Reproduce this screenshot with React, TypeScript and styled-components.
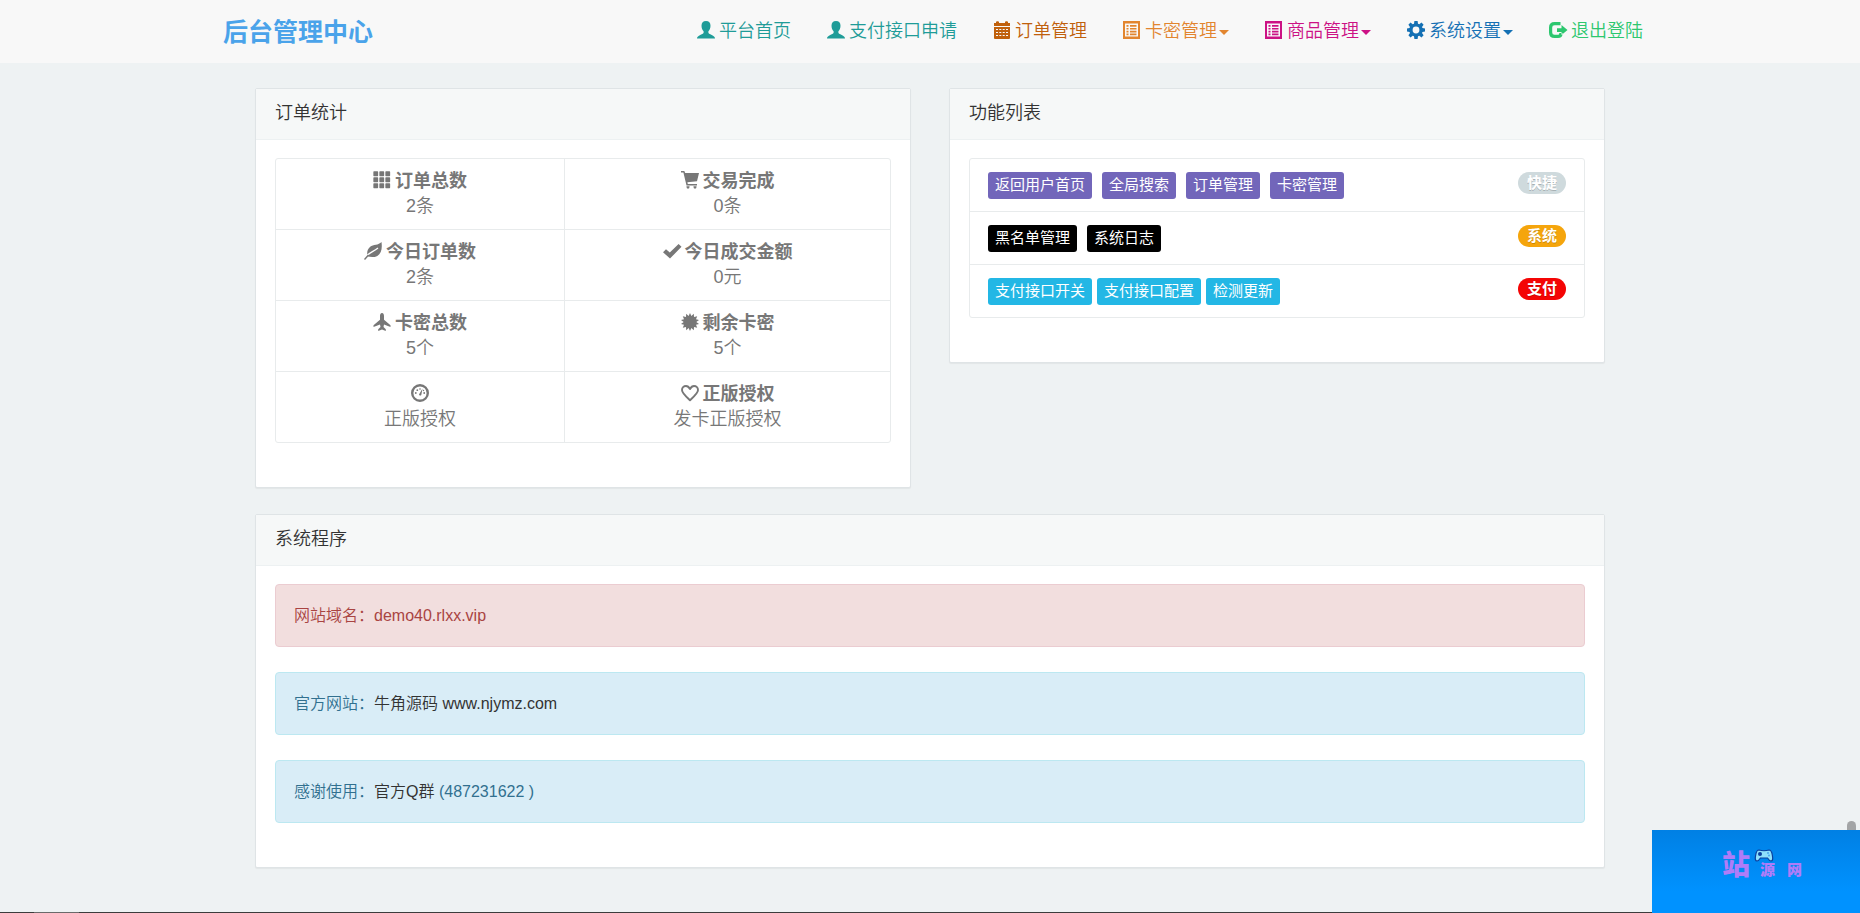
import React from 'react';
import styled, { createGlobalStyle } from 'styled-components';

const GlobalStyle = createGlobalStyle`
  *, *::before, *::after { box-sizing: border-box; }
  body {
    margin: 0;
    background: #eef2f3;
    color: #333;
    font: 350 16px/25px "Liberation Sans", "Noto Sans CJK SC", sans-serif;
  }
  a { color: inherit; text-decoration: none; }
`;

const Page = styled.div`
  min-height: 100vh;
`;

const Header = styled.header`
  background: #f8f8f8;
  padding: 0 16px;
`;

const HeaderInner = styled.div`
  display: flex;
  align-items: center;
  justify-content: space-between;
  max-width: 1426px;
  min-height: 63px;
  margin: 0 auto;
`;

const Brand = styled.a`
  padding-left: 6px;
  font-size: 25px;
  line-height: 36px;
  font-weight: 700;
  color: #4aa3ea;
`;

const Nav = styled.nav`
  display: flex;
  flex-wrap: wrap;
  gap: 0 36px;
`;

const NavLink = styled.a<{ $color: string }>`
  display: inline-flex;
  align-items: center;
  gap: 4px;
  font-size: 18px;
  line-height: 25px;
  color: ${p => p.$color};
`;

const NavToggle = styled.button<{ $color: string }>`
  display: inline-flex;
  align-items: center;
  gap: 4px;
  padding: 0;
  border: 0;
  background: none;
  font: inherit;
  font-size: 18px;
  line-height: 25px;
  color: ${p => p.$color};
  cursor: pointer;
`;

const Caret = styled.span`
  display: inline-block;
  margin-left: 2px;
  vertical-align: middle;
  border-top: 5px solid currentColor;
  border-left: 5px solid transparent;
  border-right: 5px solid transparent;
`;

const Glyph = styled.svg`
  flex: none;
  width: 18px;
  height: 18px;
  margin-bottom: 3px;
  fill: currentColor;
`;

const Main = styled.main`
  display: grid;
  grid-template-columns: 1fr 1fr;
  align-items: start;
  gap: 26px 38px;
  max-width: 1350px;
  margin: 0 auto;
  padding: 25px 0;
`;

const Panel = styled.section<{ $wide?: boolean }>`
  grid-column: ${p => (p.$wide ? '1 / -1' : 'auto')};
  background: #fff;
  border: 1px solid #dfe4e6;
  border-radius: 2px;
  box-shadow: 0 1px 1px rgba(0, 0, 0, 0.05);
`;

const PanelTitle = styled.h2`
  margin: 0;
  padding: 12px 19px 13px;
  background: #f6f8f8;
  border-bottom: 1px solid #edf1f2;
  font-size: 18px;
  line-height: 25px;
  font-weight: 350;
  color: #333;
`;

const PanelBody = styled.div`
  padding: 18px 19px 44px;
`;

const StatsFrame = styled.div`
  border: 1px solid #e8ebec;
  border-radius: 3px;
`;

const Stats = styled.table`
  width: 100%;
  border-collapse: collapse;
  text-align: center;
  font-size: 18px;
  line-height: 25px;
  color: #777;
`;

const StatCell = styled.td`
  padding: 10px 18px;
  border-bottom: 1px solid #e8ebec;
  tr:last-child > & { border-bottom: 0; }
  &:first-child { width: 47%; border-right: 1px solid #e8ebec; }
`;

const StatName = styled.div`
  display: flex;
  align-items: center;
  justify-content: center;
  gap: 4px;
  min-height: 25px;
  font-weight: 700;
`;

const Functions = styled.ul`
  margin: 0;
  padding: 0;
  list-style: none;
  border: 1px solid #e8ebec;
  border-radius: 3px;
`;

const FunctionRow = styled.li`
  display: flex;
  justify-content: space-between;
  align-items: flex-start;
  padding: 13px 18px 12px;
  & + & { border-top: 1px solid #e8ebec; }
`;

const Labels = styled.div<{ $gap: number }>`
  display: flex;
  flex-wrap: wrap;
  gap: ${p => p.$gap}px;
`;

const Label = styled.a<{ $color: string }>`
  padding: 1px 7px 2px;
  border-radius: 3px;
  background: ${p => p.$color};
  color: #fff;
  font-size: 15px;
  line-height: 24px;
  font-weight: 400;
`;

const Badge = styled.span<{ $color: string }>`
  padding: 0 9px;
  border-radius: 11px;
  background: ${p => p.$color};
  color: #fff;
  font-size: 15px;
  line-height: 22px;
  font-weight: 700;
  text-shadow: 0 1px 0 rgba(0, 0, 0, 0.2);
`;

const Notices = styled.div`
  display: grid;
  gap: 25px;
`;

const Notice = styled.p<{ $danger?: boolean }>`
  margin: 0;
  padding: 18px;
  border: 1px solid ${p => (p.$danger ? '#ebccd1' : '#bce8f1')};
  border-radius: 4px;
  background: ${p => (p.$danger ? '#f2dede' : '#d9edf7')};
  color: ${p => (p.$danger ? '#a94442' : '#31708f')};
`;

const NoticeLink = styled.a`
  color: #333;
`;

const Watermark = styled.aside`
  position: fixed;
  right: 0;
  bottom: 0;
  display: flex;
  justify-content: center;
  align-items: flex-start;
  width: 208px;
  height: 83px;
  padding: 18px 0 0 12px;
  background: linear-gradient(#0080e4, #0092ff 75%);
  color: #b07cf8;
  font-weight: 900;
`;

const MarkBig = styled.span`
  font-size: 28px;
  line-height: 36px;
`;

const MarkSmall = styled.span`
  display: flex;
  gap: 12px;
  font-size: 15px;
  line-height: 16px;
`;

const MarkColumn = styled.div`
  display: grid;
  padding-left: 10px;
`;

const Pad = styled.svg`
  width: 20px;
  height: 14px;
  margin-left: -6px;
`;

const ScrollTip = styled.div`
  position: fixed;
  right: 4px;
  bottom: 83px;
  width: 9px;
  height: 9px;
  border-radius: 5px 5px 0 0;
  background: #a3a5a6;
`;

const BottomEdge = styled.div`
  position: fixed;
  left: 0;
  right: 208px;
  bottom: 0;
  height: 1px;
  background: linear-gradient(90deg, #3c3c3c 34px, #6a6a6a 34px 79px, #3c3c3c 79px);
`;

const shapes = {
  user: <path d="M9 0C6 0 4.500 2 4.500 4.800C4.500 7.400 5.400 9.200 6.600 10.300V11.800C6.300 12.800 4.600 13.300 2.800 14.200C1 15.100 0 16 0 17.600H18C18 16 17 15.100 15.200 14.200C13.400 13.300 11.700 12.800 11.400 11.800V10.300C12.600 9.200 13.500 7.400 13.500 4.800C13.500 2 12 0 9 0Z" />,
  calendar: <path fillRule="evenodd" d="M1 2H3V1C3 0 6 0 6 1V2H12V1C12 0 15 0 15 1V2H17V5H1ZM1 6H17V17Q17 18 16 18H2Q1 18 1 17ZM3 8V9H5V8ZM6.300 8V9H8.300V8ZM9.700 8V9H11.700V8ZM13 8V9H15V8ZM3 11V12H5V11ZM6.300 11V12H8.300V11ZM9.700 11V12H11.700V11ZM13 11V12H15V11ZM3 14V15H5V14ZM6.300 14V15H8.300V14ZM9.700 14V15H11.700V14ZM13 14V15H15V14Z" />,
  list: <path fillRule="evenodd" d="M0 0H17V18H0ZM2 2.500V15.500H15V2.500ZM3.500 4H5.500V5.800H3.500ZM7 4H13.500V5.800H7ZM3.500 7H5.500V8.600H3.500ZM7 7H13.500V8.600H7ZM3.500 9.800H5.500V11.400H3.500ZM7 9.800H13.500V11.400H7ZM3.500 12.600H5.500V14.200H3.500ZM7 12.600H13.500V14.200H7Z" />,
  cog: <path fillRule="evenodd" d="M7.400 0H10.600L11 2.700L12.300 3.200L14.500 1.500L16.600 3.700L15 5.900L15.500 7.100L18 7.500V10.500L15.500 10.900L15 12.100L16.600 14.300L14.500 16.500L12.300 14.800L11 15.300L10.600 18H7.400L7 15.300L5.700 14.800L3.500 16.500L1.400 14.300L3 12.100L2.500 10.900L0 10.500V7.500L2.500 7.100L3 5.900L1.400 3.700L3.500 1.500L5.700 3.200L7 2.700ZM9 5.600A3.400 3.400 0 1 0 9 12.400A3.400 3.400 0 1 0 9 5.600Z" />,
  logout: <path d="M11.500 1H5.500Q0 1 0 6.500V11.500Q0 17 5.500 17H9Q13.500 17 13.500 13V12H10.300V12.500Q10.300 13.800 9 13.800H5.500Q3.200 13.800 3.200 11.500V6.500Q3.200 4.200 5.500 4.200H11.500ZM12.500 4L18.500 9L12.500 14V11H8V7.200H12.500Z" />,
  th: <path d="M1 1H4.500V4.500H1ZM7 1H10.500V4.500H7ZM13 1H16.500V4.500H13ZM1 7H4.500V10.500H1ZM7 7H10.500V10.500H7ZM13 7H16.500V10.500H13ZM1 13H4.500V16.500H1ZM7 13H10.500V16.500H7ZM13 13H16.500V16.500H13Z" stroke="currentColor" strokeWidth="1.300" strokeLinejoin="round" />,
  leaf: <><path d="M17.500 0C18.400 6.500 17.300 11.500 13.300 13.900C10 15.800 6 15 3.800 14.600C2.600 11.400 3 7.600 6.200 4.800C9.200 2.300 14.500 3.500 17.500 0Z" /><path d="M3 13.500C6 10.500 9.500 9.500 14 6" fill="none" stroke="#fff" strokeWidth="1.300" /><path d="M.5 17.500L4.500 13" stroke="currentColor" strokeWidth="1.400" /></>,
  plane: <path d="M9 0C10.500 0 11 1.500 11 3V6.800L17.500 12.300V14L11 11.500L10.500 14L12.800 16.300V18L9 16.600L5.200 18V16.300L7.500 14L7 11.500L.5 14V12.300L7 6.800V3C7 1.500 7.500 0 9 0Z" />,
  dashboard: <><circle cx="9" cy="9" r="7.800" fill="none" stroke="currentColor" strokeWidth="2.400" /><path d="M8 10.500L11.500 4.500L10.300 11A1.300 1.300 0 0 1 8 10.500Z" /><circle cx="4.800" cy="9" r=".9" /><circle cx="6.300" cy="6.200" r=".9" /><circle cx="9" cy="5" r=".8" /><circle cx="13.200" cy="9" r=".9" /><circle cx="12.500" cy="6.500" r=".7" /></>,
  cart: <path d="M0 0H3.300L4.200 2H18L16 10.200L6.400 11.200L6.800 13H16V14.500H5.500L2.400 1.600H0ZM5.500 15.200H8.500V16L8 17.500H6L5.500 16ZM12.500 15.200H15.500V16L15 17.500H13L12.500 16Z" />,
  check: <path d="M0 10.200L3 7.200L6.800 10.400L15.600 2L18.500 4.700L7 16.600Z" />,
  certificate: <path d="M9 0L10.400 3L12.800 .8L13 4.100L16.200 3.200L15 6.300L18 7L15.300 9L18 11L15 11.700L16.200 14.800L13 13.900L12.800 17.200L10.400 15L9 18L7.600 15L5.200 17.200L5 13.900L1.800 14.800L3 11.700L0 11L2.700 9L0 7L3 6.300L1.800 3.200L5 4.100L5.200 .8L7.600 3Z" />,
  heart: <path fill="none" stroke="currentColor" strokeWidth="1.900" strokeLinejoin="round" d="M9 5C7.800 2.800 6.600 2 5 2C2.600 2 1 3.800 1 6C1 9 4 11.500 9 16.200C14 11.500 17 9 17 6C17 3.800 15.400 2 13 2C11.400 2 10.200 2.800 9 5Z" />,
};

type IconName = keyof typeof shapes;

const Icon = ({ name }: { name: IconName }) => (
  <Glyph viewBox="0 0 18 18" overflow="visible" aria-hidden="true">{shapes[name]}</Glyph>
);

const navItems: { icon: IconName; text: string; color: string; menu?: boolean }[] = [
  { icon: 'user', text: '平台首页', color: '#1f9c98' },
  { icon: 'user', text: '支付接口申请', color: '#1f9c98' },
  { icon: 'calendar', text: '订单管理', color: '#c0600c' },
  { icon: 'list', text: '卡密管理', color: '#e2852f', menu: true },
  { icon: 'list', text: '商品管理', color: '#cc1285', menu: true },
  { icon: 'cog', text: '系统设置', color: '#1470b4', menu: true },
  { icon: 'logout', text: '退出登陆', color: '#2dc76f' },
];

type Stat = { icon: IconName; name?: string; value: string };

const stats: Stat[][] = [
  [{ icon: 'th', name: '订单总数', value: '2条' }, { icon: 'cart', name: '交易完成', value: '0条' }],
  [{ icon: 'leaf', name: '今日订单数', value: '2条' }, { icon: 'check', name: '今日成交金额', value: '0元' }],
  [{ icon: 'plane', name: '卡密总数', value: '5个' }, { icon: 'certificate', name: '剩余卡密', value: '5个' }],
  [{ icon: 'dashboard', value: '正版授权' }, { icon: 'heart', name: '正版授权', value: '发卡正版授权' }],
];

const functionRows = [
  { badge: '快捷', badgeColor: '#cfdadd', color: '#7266ba', gap: 10, links: ['返回用户首页', '全局搜索', '订单管理', '卡密管理'] },
  { badge: '系统', badgeColor: '#f5a50c', color: '#000', gap: 10, links: ['黑名单管理', '系统日志'] },
  { badge: '支付', badgeColor: '#f40505', color: '#23b7e5', gap: 5, links: ['支付接口开关', '支付接口配置', '检测更新'] },
];

export default function App() {
  return (
    <Page>
      <GlobalStyle />
      <Header>
        <HeaderInner>
          <Brand href="#">后台管理中心</Brand>
          <Nav>
            {navItems.map(item =>
              item.menu ? (
                <NavToggle key={item.text} type="button" aria-haspopup="menu" $color={item.color}>
                  <Icon name={item.icon} />
                  <span>{item.text}<Caret /></span>
                </NavToggle>
              ) : (
                <NavLink key={item.text} href="#" $color={item.color}>
                  <Icon name={item.icon} />
                  <span>{item.text}</span>
                </NavLink>
              ),
            )}
          </Nav>
        </HeaderInner>
      </Header>

      <Main>
        <Panel>
          <PanelTitle>订单统计</PanelTitle>
          <PanelBody>
            <StatsFrame>
              <Stats>
                <tbody>
                  {stats.map((row, i) => (
                    <tr key={i}>
                      {row.map(stat => (
                        <StatCell key={stat.icon}>
                          <StatName>
                            <Icon name={stat.icon} />
                            {stat.name && <span>{stat.name}</span>}
                          </StatName>
                          {stat.value}
                        </StatCell>
                      ))}
                    </tr>
                  ))}
                </tbody>
              </Stats>
            </StatsFrame>
          </PanelBody>
        </Panel>

        <Panel>
          <PanelTitle>功能列表</PanelTitle>
          <PanelBody>
            <Functions>
              {functionRows.map(row => (
                <FunctionRow key={row.badge}>
                  <Labels $gap={row.gap}>
                    {row.links.map(text => (
                      <Label key={text} href="#" $color={row.color}>{text}</Label>
                    ))}
                  </Labels>
                  <Badge $color={row.badgeColor}>{row.badge}</Badge>
                </FunctionRow>
              ))}
            </Functions>
          </PanelBody>
        </Panel>

        <Panel $wide>
          <PanelTitle>系统程序</PanelTitle>
          <PanelBody>
            <Notices>
              <Notice $danger>网站域名：demo40.rlxx.vip</Notice>
              <Notice>官方网站：<NoticeLink href="#">牛角源码 www.njymz.com</NoticeLink></Notice>
              <Notice>感谢使用：<NoticeLink href="#">官方Q群</NoticeLink> (487231622 )</Notice>
            </Notices>
          </PanelBody>
        </Panel>
      </Main>

      <BottomEdge />
      <ScrollTip />
      <Watermark>
        <MarkBig>站</MarkBig>
        <MarkColumn>
          <Pad viewBox="0 1 20 14" aria-hidden="true">
            <path d="M5 3Q10 4.500 15 3Q17.500 3 18.300 8Q19.500 14 17 14Q15.500 14 13.500 11H6.500Q4.500 14 3 14Q.5 14 1.700 8Q2.500 3 5 3Z" fill="#8fe0fb" stroke="#0a3f9e" strokeWidth="1.200" />
            <circle cx="6" cy="7" r="2" fill="#0a3f9e" />
            <circle cx="14" cy="6" r="1" fill="#4ba6ee" />
            <circle cx="15" cy="8.500" r="1" fill="#4ba6ee" />
          </Pad>
          <MarkSmall><span>源</span><span>网</span></MarkSmall>
        </MarkColumn>
      </Watermark>
    </Page>
  );
}
